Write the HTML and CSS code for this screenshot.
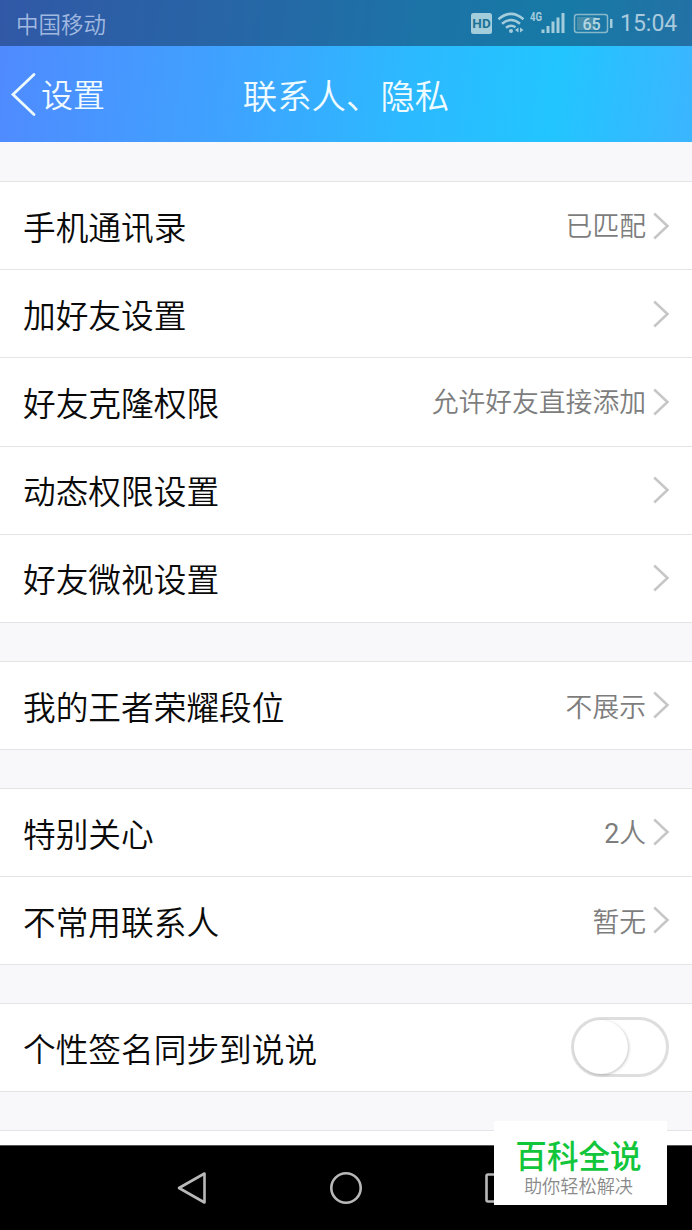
FILE: index.html
```html
<!DOCTYPE html>
<html lang="zh-CN">
<head>
<meta charset="utf-8">
<title>联系人、隐私</title>
<link rel="stylesheet" href="styles.css">
</head>
<body>
<svg class="defs" width="0" height="0"><symbol id="chev" viewBox="0 0 18 30"><path d="M2.200 2.500 15.500 15 2.200 27.500" fill="none" stroke="#c6c6c6" stroke-width="2.500"/></symbol></svg>
<div class="screen">
  <header class="top">
    <div class="status">
      <span class="carrier">中国移动</span>
      <svg class="status-icons" width="144" height="46" viewBox="0 0 144 46">
        <rect x="0" y="13" width="21" height="21" rx="2.500" fill="#a4cddc"/>
        <text x="10.500" y="28.300" text-anchor="middle" class="hd">HD</text>
        <g fill="none" stroke="#a4cddc" stroke-width="2.500">
          <path d="M27.500 19.200Q40 8.500 52.500 19.200"/>
          <path d="M31 23.700Q40 16.200 49 23.700"/>
          <path d="M35 27.800Q40 24 44.500 27.300"/>
        </g>
        <circle cx="40" cy="31" r="2" fill="#a4cddc"/>
        <path d="M47.500 27.500v5l-3.500-2.500zM49 27.500v5l3.500-2.500z" fill="#a4cddc"/>
        <text x="59" y="21" class="net" textLength="12" lengthAdjust="spacingAndGlyphs">4G</text>
        <path d="M70.500 29.500h3V33h-3zM75.500 26h3v7h-3zM80.500 21.500h3V33h-3zM85.500 17.500h3V33h-3zM90.500 13h3v20h-3z" fill="#a4cddc"/>
        <rect x="103.500" y="14.500" width="33" height="18" rx="2.500" fill="none" stroke="#87b9cd" stroke-width="1.500"/>
        <rect x="106" y="17" width="19" height="13" fill="#488eaa"/>
        <text x="120.500" y="29.500" text-anchor="middle" class="pct">65</text>
        <path d="M139 19h2.500v9H139z" fill="#a4cddc"/>
      </svg>
      <time class="clock">15:04</time>
    </div>
    <div class="bar">
      <a class="back"><svg width="28" height="46" viewBox="0 0 28 46"><path d="M25 3.500 4 23.500 25 43.500" fill="none" stroke="#ecfaff" stroke-width="2.800" stroke-linecap="round"/></svg><span>设置</span></a>
      <h1 class="title">联系人、隐私</h1>
    </div>
  </header>
  <main class="list">
    <section class="group first">
      <div class="row"><span class="label">手机通讯录</span><span class="value">已匹配</span><svg class="chev"><use href="#chev"/></svg></div>
      <div class="row"><span class="label">加好友设置</span><svg class="chev"><use href="#chev"/></svg></div>
      <div class="row"><span class="label">好友克隆权限</span><span class="value">允许好友直接添加</span><svg class="chev"><use href="#chev"/></svg></div>
      <div class="row"><span class="label">动态权限设置</span><svg class="chev"><use href="#chev"/></svg></div>
      <div class="row"><span class="label">好友微视设置</span><svg class="chev"><use href="#chev"/></svg></div>
    </section>
    <section class="group">
      <div class="row"><span class="label">我的王者荣耀段位</span><span class="value">不展示</span><svg class="chev"><use href="#chev"/></svg></div>
    </section>
    <section class="group">
      <div class="row"><span class="label">特别关心</span><span class="value"><span class="num">2</span>人</span><svg class="chev"><use href="#chev"/></svg></div>
      <div class="row"><span class="label">不常用联系人</span><span class="value">暂无</span><svg class="chev"><use href="#chev"/></svg></div>
    </section>
    <section class="group">
      <div class="row"><span class="label">个性签名同步到说说</span><span class="switch"><span class="knob"></span></span></div>
    </section>
    <section class="group rest"></section>
  </main>
  <nav class="nav">
    <svg width="30" height="34" viewBox="0 0 30 34"><path d="M27.500 2.500v29L2 17z" fill="none" stroke="#b8b8b8" stroke-width="2.600" stroke-linejoin="round"/></svg>
    <svg width="34" height="34" viewBox="0 0 34 34"><circle cx="17" cy="17" r="14.700" fill="none" stroke="#b8b8b8" stroke-width="2.600"/></svg>
    <svg width="30" height="34" viewBox="0 0 30 34"><rect x="1.500" y="3.500" width="27" height="27" rx="1.500" fill="none" stroke="#b8b8b8" stroke-width="2.600"/></svg>
  </nav>
  <aside class="badge">
    <strong class="brand">百科全说</strong>
    <span class="slogan">助你轻松解决</span>
  </aside>
</div>
</body>
</html>
```
FILE: styles.css
```css
* { box-sizing: border-box; }
body {
  margin: 0;
  font-family: "Noto Sans CJK SC", sans-serif;
  font-weight: 350;
}
.defs { position: absolute; }
.screen {
  position: relative;
  width: 692px;
  height: 1230px;
  overflow: hidden;
  display: flex;
  flex-direction: column;
  background: #f8f8fb;
}
.top {
  height: 142px;
  flex: none;
  background: linear-gradient(97deg, #508aff 0%, #3fa2ff 33%, #2cb9ff 59%, #22c5ff 80%, #3bb5ff 100%);
}
.status {
  height: 46px;
  display: flex;
  align-items: center;
  padding: 0 15px 0 16px;
  background: rgba(8, 24, 52, .44);
}
.carrier {
  flex: 1;
  font-size: 22.5px;
  line-height: 46px;
  color: #a1b9e0;
}
.status-icons { margin-right: 5px; }
.hd { font: bold 13.5px Roboto, sans-serif; fill: #1d7295; }
.net { font: bold 12px Roboto, sans-serif; fill: #a4cddc; }
.pct { font: 500 16px Roboto, sans-serif; fill: #b5d7e3; }
.clock {
  font: 23px/46px Roboto, sans-serif;
  color: #a9cadd;
  width: 57px;
  white-space: nowrap;
  padding-top: 2px;
}
.bar {
  height: 96px;
  display: grid;
  grid-template-columns: 230px 232px 230px;
  align-items: center;
  color: #effbff;
}
.back {
  display: flex;
  align-items: center;
  gap: 4px;
  padding-left: 9px;
  font-size: 32px;
  line-height: 48px;
}
.back span { padding-bottom: 3px; }
.title {
  margin: 0;
  text-align: center;
  font-size: 34.4px;
  line-height: 48px;
  font-weight: 350;
  white-space: nowrap;
}
.list { flex: 1; overflow: hidden; }
.group {
  margin-top: 38px;
  background: #fff;
  border-top: 1px solid #e4e4e7;
}
.first { margin-top: 39px; }
.row {
  height: 88px;
  display: flex;
  align-items: center;
  padding: 0 22px 0 23px;
  border-bottom: 1px solid #e4e4e7;
}
.first .row { height: 88.2px; }
.label {
  flex: 1;
  font-size: 32.7px;
  line-height: 48px;
  color: #0a0a0a;
}
.group:not(.first) .label { padding-top: 2px; }
.value {
  font-size: 26.8px;
  line-height: 40px;
  color: #7d7d7d;
  margin-right: 6px;
  padding-bottom: 1px;
}
.group:not(.first) .value { padding: 1px 0 0; }
.num { font-family: Roboto, sans-serif; font-weight: 400; }
.chev { width: 18px; height: 30px; }
.switch {
  width: 98px;
  height: 60px;
  margin-right: 1px;
  border: 3px solid #dedede;
  border-radius: 30px;
}
.knob {
  display: block;
  width: 54px;
  height: 54px;
  border-radius: 50%;
  background: #fff;
  box-shadow: 1px 1px 3px rgba(0, 0, 0, .22);
}
.rest { height: 60px; }
.nav {
  height: 85px;
  flex: none;
  display: flex;
  justify-content: space-between;
  align-items: center;
  padding: 0 177px;
  background: #000;
  border-top: 1px solid #555;
}
.badge {
  position: absolute;
  left: 494px;
  top: 1121px;
  width: 173px;
  height: 84px;
  background: #fff;
  display: flex;
  flex-direction: column;
  align-items: center;
  padding: 12px 4px 0 0;
}
.brand {
  font-size: 31.6px;
  line-height: 43px;
  font-weight: 500;
  color: #12c63b;
}
.slogan {
  font-size: 18.2px;
  line-height: 18px;
  color: #8a8a8a;
}
```
